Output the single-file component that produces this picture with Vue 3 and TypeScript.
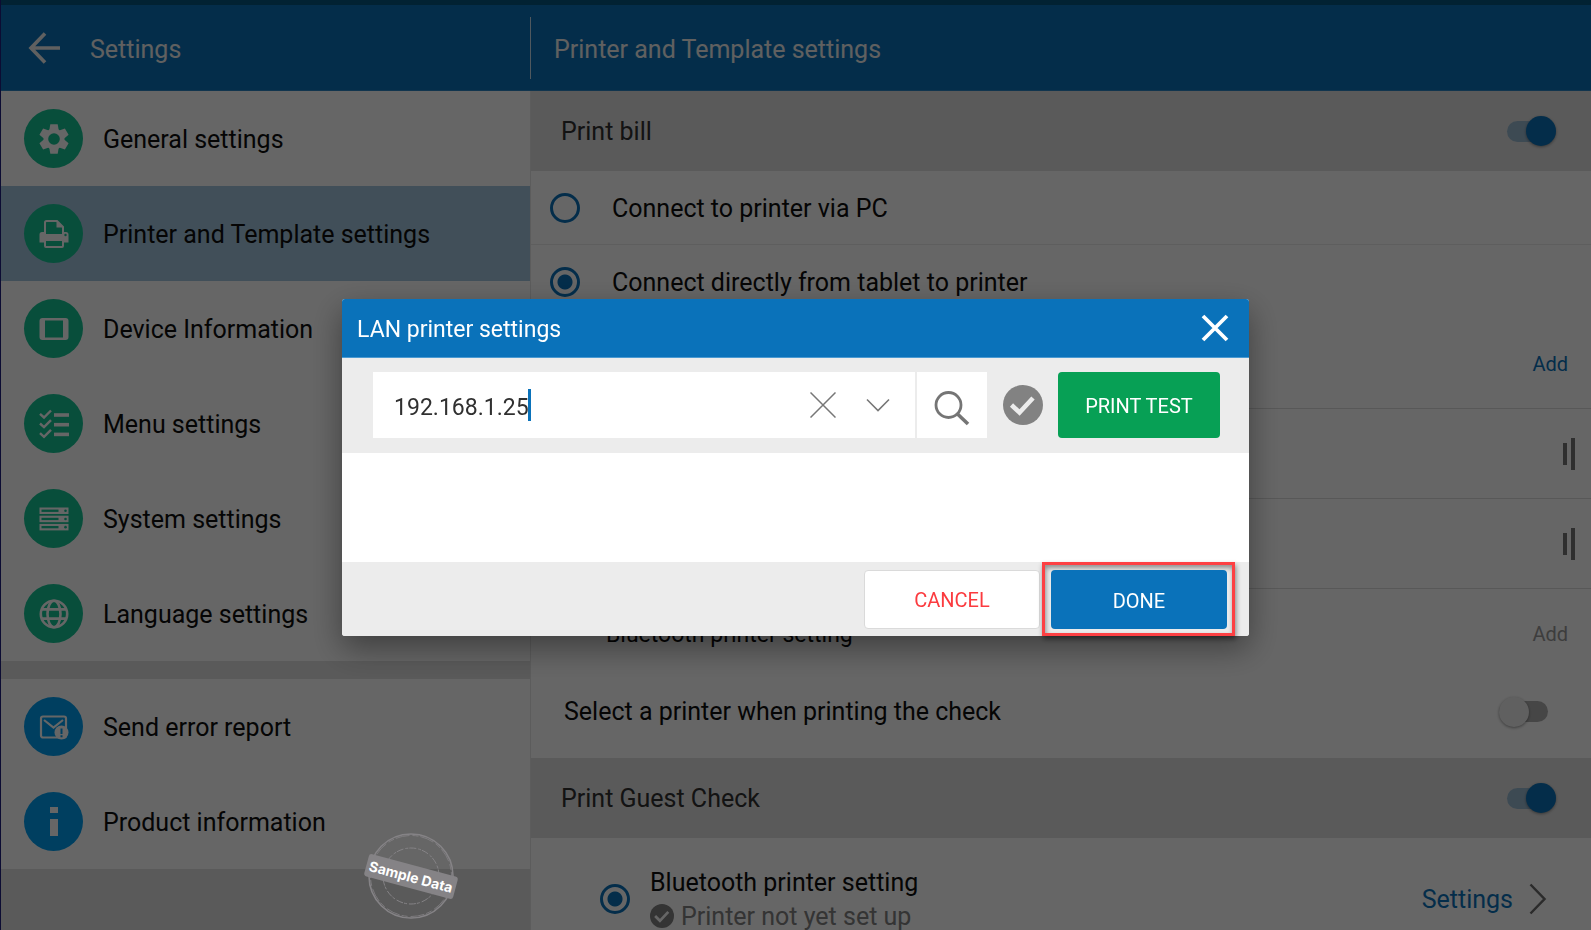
<script setup lang="ts">
import { ref } from 'vue'

interface MenuItem {
  id: string
  label: string
}

const primaryMenu: MenuItem[] = [
  { id: 'general', label: 'General settings' },
  { id: 'printer', label: 'Printer and Template settings' },
  { id: 'device', label: 'Device Information' },
  { id: 'menu', label: 'Menu settings' },
  { id: 'system', label: 'System settings' },
  { id: 'language', label: 'Language settings' },
]
const secondaryMenu: MenuItem[] = [
  { id: 'report', label: 'Send error report' },
  { id: 'product', label: 'Product information' },
]

const activeId = ref('printer')
const connection = ref('tablet')
const printBill = ref(true)
const selectPrinter = ref(false)
const guestCheck = ref(true)
const guestPrinter = ref('bluetooth')
const address = ref('192.168.1.25')
const gearAngles = [0, 60, 120, 180, 240, 300]
const listRows = [0, 1, 2]
</script>

<template>
  <div class="app">
    <div class="status-strip"></div>
    <header class="topbar">
      <div class="topbar-left">
        <button class="icon-btn back" type="button" aria-label="Back">
          <svg width="32" height="32" viewBox="0 0 32 32" fill="none" stroke="currentColor" stroke-width="3.600">
            <path d="M17 1.500L3 16l14 14.500M3 16H32" />
          </svg>
        </button>
        <span class="bar-text">Settings</span>
      </div>
      <h1 class="topbar-title bar-text">Printer and Template settings</h1>
    </header>

    <div class="body">
      <nav class="sidebar">
        <div class="menu">
          <a
            v-for="item in primaryMenu"
            :key="item.id"
            href="#"
            class="menu-item"
            :class="{ active: item.id === activeId }"
            @click.prevent="activeId = item.id"
          >
            <span class="badge green">
              <svg width="30" height="30" viewBox="0 0 30 30">
                <g v-if="item.id === 'general'">
                  <circle cx="15" cy="15" r="10.500" fill="#fff" />
                  <path
                    v-for="a in gearAngles"
                    :key="a"
                    d="M11.300 0.300h7.400l1 6h-9.400z"
                    fill="#fff"
                    :transform="`rotate(${a} 15 15)`"
                  />
                  <circle cx="15" cy="15" r="5.800" fill="#14c394" />
                </g>
                <g v-else-if="item.id === 'printer'">
                  <path d="M0.500 15.500a2.500 2.500 0 0 1 2.500-2.500h24a2.500 2.500 0 0 1 2.500 2.500v8h-29z" fill="#fff" />
                  <path d="M6 16V3.500a1.500 1.500 0 0 1 1.500-1.500h10.500l6 6v8z" fill="#14c394" stroke="#fff" stroke-width="2" />
                  <path d="M17.500 2v6.500h6.500z" fill="#fff" />
                  <rect x="5" y="15" width="20" height="4" fill="#fff" />
                  <rect x="6" y="21" width="18" height="7" rx="1" fill="#14c394" stroke="#fff" stroke-width="2" />
                  <circle cx="26.500" cy="16" r="1.200" fill="#14c394" />
                </g>
                <g v-else-if="item.id === 'device'">
                  <rect x="0.500" y="4" width="29" height="22" rx="3" fill="#fff" />
                  <rect x="6" y="6.500" width="18" height="17" fill="#14c394" />
                </g>
                <g v-else-if="item.id === 'menu'" fill="none" stroke="#fff">
                  <g v-for="n in listRows" :key="n" :transform="`translate(0 ${n * 9.7})`">
                    <path d="M1 4.800l4 3.700 7-7" stroke-width="2.400" />
                    <path d="M15 6h15" stroke-width="3.600" />
                  </g>
                </g>
                <g v-else-if="item.id === 'system'">
                  <g v-for="n in listRows" :key="n" :transform="`translate(0 ${n * 8.2})`">
                    <rect x="0.500" y="3.500" width="29" height="6.500" fill="#fff" />
                    <rect x="2.500" y="5.600" width="17" height="2.300" fill="#14c394" />
                    <circle cx="26.500" cy="6.750" r="1.300" fill="#14c394" />
                  </g>
                </g>
                <g v-else fill="none" stroke="#fff" stroke-width="2.600">
                  <circle cx="15" cy="15" r="13.200" />
                  <ellipse cx="15" cy="15" rx="6.500" ry="13.200" />
                  <path d="M3 10.400h24M3 19.600h24" />
                </g>
              </svg>
            </span>
            <span class="text">{{ item.label }}</span>
          </a>
        </div>
        <div class="menu">
          <a v-for="item in secondaryMenu" :key="item.id" href="#" class="menu-item" @click.prevent="activeId = item.id">
            <span class="badge blue">
              <svg width="30" height="30" viewBox="0 0 30 30">
                <g v-if="item.id === 'report'" fill="none" stroke="#fff">
                  <rect x="2" y="4.500" width="25" height="21" rx="2" stroke-width="2.200" />
                  <path d="M5 8l9.500 7.500L24 8" stroke-width="2.200" />
                  <circle cx="22.500" cy="20.500" r="7" fill="#fff" stroke="none" />
                  <path d="M22.500 16.500v5.500M22.500 23.300v2" stroke="#009ef0" stroke-width="2" />
                </g>
                <path v-else d="M11 0h8v6h-8zM11 12h8v17h-8z" fill="#fff" />
              </svg>
            </span>
            <span class="text">{{ item.label }}</span>
          </a>
        </div>
      </nav>

      <main class="content">
        <label class="section">
          <span class="text">Print bill</span>
          <input v-model="printBill" type="checkbox" class="switch" />
        </label>
        <label class="row option lined">
          <input v-model="connection" type="radio" class="radio" name="connection" value="pc" />
          <span class="text">Connect to printer via PC</span>
        </label>
        <label class="row option">
          <input v-model="connection" type="radio" class="radio" name="connection" value="tablet" />
          <span class="text">Connect directly from tablet to printer</span>
        </label>
        <div class="row sub deep">
          <a href="#" class="add">Add</a>
        </div>
        <div v-for="n in 2" :key="n" class="row sub drag">
          <button class="handle" type="button" aria-label="Reorder"><i></i><i></i></button>
        </div>
        <div class="row sub muted">
          <span class="text">Bluetooth printer setting</span>
          <a href="#" class="add">Add</a>
        </div>
        <label class="row choose">
          <span>Select a printer when printing the check</span>
          <input v-model="selectPrinter" type="checkbox" class="switch" />
        </label>
        <label class="section">
          <span class="text">Print Guest Check</span>
          <input v-model="guestCheck" type="checkbox" class="switch" />
        </label>
        <div class="row guest">
          <label class="guest-label">
            <input v-model="guestPrinter" type="radio" class="radio" name="guest" value="bluetooth" />
            <span class="guest-text">
              <span class="text">Bluetooth printer setting</span>
              <span class="state">
                <svg width="24" height="24" viewBox="0 0 40 40">
                  <circle cx="20" cy="20" r="20" fill="#828282" />
                  <path d="M8.500 20l8 8 14-15" fill="none" stroke="#fff" stroke-width="4.500" />
                </svg>
                <span class="text">Printer not yet set up</span>
              </span>
            </span>
          </label>
          <a href="#" class="more">
            <span class="text">Settings</span>
            <svg width="18" height="32" viewBox="0 0 18 32" fill="none" stroke="#6b6b6b" stroke-width="2.500">
              <path d="M1.500 1.500L15.500 16 1.500 30.500" />
            </svg>
          </a>
        </div>
      </main>
    </div>

    <div class="backdrop">
      <section class="dialog" role="dialog" aria-labelledby="dialog-title">
        <header class="dialog-head">
          <h2 id="dialog-title" class="bar-text">LAN printer settings</h2>
          <button class="icon-btn" type="button" aria-label="Close">
            <svg width="28" height="28" viewBox="0 0 28 28" fill="none" stroke="#fff" stroke-width="3.800">
              <path d="M2 2l24 24M26 2L2 26" />
            </svg>
          </button>
        </header>
        <div class="dialog-tools">
          <div class="field">
            <input v-model="address" class="address" type="text" aria-label="Printer address" />
            <span class="caret"></span>
            <button class="icon-btn clear" type="button" aria-label="Clear">
              <svg width="26" height="26" viewBox="0 0 26 26" fill="none" stroke="#777" stroke-width="1.500">
                <path d="M0.500 0.500l25 25M25.500 0.500l-25 25" />
              </svg>
            </button>
            <button class="icon-btn" type="button" aria-label="Show addresses">
              <svg width="24" height="14" viewBox="0 0 24 14" fill="none" stroke="#777" stroke-width="1.600">
                <path d="M1 1.500l11 11 11-11" />
              </svg>
            </button>
          </div>
          <button class="search" type="button" aria-label="Search">
            <svg width="36" height="36" viewBox="0 0 36 36" fill="none" stroke="#757575">
              <circle cx="14.500" cy="15" r="12.500" stroke-width="2.800" />
              <path d="M23.500 24L34 34" stroke-width="3.600" />
            </svg>
          </button>
          <svg class="verified" width="40" height="40" viewBox="0 0 40 40">
            <circle cx="20" cy="20" r="20" fill="#828282" />
            <path d="M8.500 20l8 7.500L30 13" fill="none" stroke="#ececec" stroke-width="4.600" />
          </svg>
          <button class="btn test" type="button">PRINT TEST</button>
        </div>
        <div class="dialog-body"></div>
        <footer class="dialog-foot">
          <button class="btn cancel" type="button">CANCEL</button>
          <div class="highlight">
            <button class="btn done" type="button">DONE</button>
          </div>
        </footer>
      </section>
    </div>

    <div class="stamp">
      <svg width="88" height="88" viewBox="0 0 88 88" fill="none" stroke="#858386">
        <circle cx="44" cy="44" r="42" stroke-width="1.600" />
        <circle cx="44" cy="44" r="40.500" stroke-width="0.800" stroke-dasharray="14 3 6 2" />
        <circle cx="44" cy="44" r="28" stroke-width="1" stroke-dasharray="7 2 3 1" />
      </svg>
      <span>Sample Data</span>
    </div>
  </div>
</template>

<style>
body {
  margin: 0;
}
</style>

<style scoped>
* {
  box-sizing: border-box;
}
.app {
  position: relative;
  display: flex;
  flex-direction: column;
  height: 100vh;
  overflow: hidden;
  font-family: Roboto, "Liberation Sans", sans-serif;
  font-size: 25px;
  line-height: 30px;
  color: #0d0d0d;
  background: #fff;
  border-left: 1px solid #202080;
}
a {
  color: inherit;
  text-decoration: none;
}
button {
  font: inherit;
  border: 0;
  padding: 0;
  cursor: pointer;
}
.text {
  padding-top: 2px;
}
.bar-text {
  padding-top: 4px;
}
.icon-btn {
  display: flex;
  background: none;
  color: inherit;
}
.status-strip {
  flex: none;
  height: 5px;
  background: #055580;
}
.topbar {
  flex: none;
  display: grid;
  grid-template-columns: minmax(0, 1fr) minmax(0, 2fr);
  align-items: center;
  height: 86px;
  color: #f0f0f0;
  background: #0a72ba;
  border-bottom: 1px solid #2b85c4;
}
.topbar-left {
  display: flex;
  align-items: center;
  gap: 30px;
  height: 62px;
  padding-left: 27px;
  border-right: 1px solid #c8dcec;
}
.topbar-title {
  margin: 0;
  padding-left: 23px;
  font-size: 25px;
  font-weight: 400;
}
.body {
  flex: 1;
  min-height: 0;
  display: grid;
  grid-template-columns: minmax(0, 1fr) minmax(0, 2fr);
}
.sidebar {
  display: flex;
  flex-direction: column;
  gap: 18px;
  min-height: 0;
  background: #e1e1e1;
  border-right: 1px solid #e6e6e6;
}
.menu {
  background: #fff;
}
.menu-item {
  display: flex;
  align-items: center;
  gap: 20px;
  height: 95px;
  padding-left: 23px;
}
.menu-item.active {
  background: #a2c6de;
}
.badge {
  display: flex;
  align-items: center;
  justify-content: center;
  width: 59px;
  height: 59px;
  border-radius: 50%;
}
.green {
  background: #14c394;
}
.blue {
  background: #009ef0;
}
.content {
  min-height: 0;
  overflow: hidden;
  background: #fff;
}
.section {
  display: flex;
  align-items: center;
  justify-content: space-between;
  height: 80px;
  padding: 0 35px 0 30px;
  color: #303030;
  background: #e1e1e1;
}
.row {
  display: flex;
  align-items: center;
}
.option {
  gap: 32px;
  height: 74px;
  padding-left: 19px;
}
.lined {
  border-bottom: 1px solid #ececec;
}
.radio {
  appearance: none;
  flex: none;
  width: 30px;
  height: 30px;
  margin: 0;
  border: 3px solid #0a72ba;
  border-radius: 50%;
}
.radio:checked {
  background: radial-gradient(circle, #0a72ba 7px, transparent 8px);
}
.switch {
  appearance: none;
  display: flex;
  align-items: center;
  width: 49px;
  height: 21px;
  margin: 0;
  border-radius: 11px;
  background: #b0b0b0;
}
.switch::before {
  content: "";
  width: 30px;
  height: 30px;
  border-radius: 50%;
  background: #f0f0f0;
  box-shadow: 0 1px 3px rgba(0, 0, 0, 0.4);
}
.switch:checked {
  justify-content: flex-end;
  background: #9ab9d0;
}
.switch:checked::before {
  background: #0a72ba;
}
.sub {
  height: 90px;
  padding: 0 23px 0 75px;
  font-size: 23px;
}
.deep,
.drag {
  border-bottom: 1px solid #dcdcdc;
}
.drag {
  padding-right: 16px;
}
.add {
  margin-left: auto;
  font-size: 20px;
  color: #0a72ba;
}
.muted .add {
  color: #9a9a9a;
}
.handle {
  display: flex;
  align-items: center;
  gap: 4px;
  margin-left: auto;
  background: none;
}
.handle i {
  width: 4px;
  height: 22px;
  background: #757575;
}
.handle i + i {
  height: 32px;
}
.choose {
  justify-content: space-between;
  height: 79px;
  padding: 0 43px 14px 33px;
}
.guest {
  justify-content: space-between;
  height: 122px;
  padding: 0 44px 0 69px;
}
.guest-label {
  display: flex;
  align-items: center;
  gap: 20px;
}
.guest-text {
  display: flex;
  flex-direction: column;
  gap: 2px;
}
.state {
  display: flex;
  align-items: center;
  gap: 7px;
  color: #828282;
}
.more {
  display: flex;
  align-items: center;
  gap: 16px;
  color: #0a72ba;
}
.backdrop {
  position: fixed;
  inset: 0;
  display: flex;
  align-items: center;
  justify-content: center;
  padding-top: 5px;
  background: rgba(0, 0, 0, 0.6);
}
.dialog {
  width: 57%;
  border-radius: 3px;
  background: #fff;
  box-shadow: 0 12px 32px rgba(0, 0, 0, 0.4);
}
.dialog-head {
  display: flex;
  align-items: center;
  justify-content: space-between;
  height: 59px;
  padding: 0 20px 0 15px;
  color: #fff;
  background: #0a72ba;
  border-bottom: 1px solid #4a9ad2;
  border-radius: 3px 3px 0 0;
}
.dialog-head h2 {
  margin: 0;
  font-size: 23px;
  font-weight: 400;
}
.dialog-tools {
  display: flex;
  align-items: center;
  padding: 14px 29px 15px 31px;
  background: #ececec;
}
.field {
  flex: 1;
  display: flex;
  align-items: center;
  height: 66px;
  padding: 0 25px 0 21px;
  background: #fff;
}
.address {
  field-sizing: content;
  padding: 5px 0 0;
  border: 0;
  outline: 0;
  font: inherit;
  font-size: 23px;
  color: #303030;
  background: none;
  caret-color: transparent;
}
.caret {
  width: 3px;
  height: 32px;
  margin-left: -1px;
  background: #0a72ba;
}
.clear {
  margin: 0 30px 0 auto;
}
.search {
  display: flex;
  align-items: center;
  justify-content: center;
  width: 70px;
  height: 66px;
  margin-left: 2px;
  padding-top: 6px;
  background: #fff;
}
.verified {
  margin: 0 15px 0 16px;
}
.btn {
  padding-top: 2px;
  border-radius: 4px;
  font-size: 20px;
}
.test {
  width: 162px;
  height: 66px;
  color: #fff;
  background: #07a055;
}
.dialog-body {
  height: 109px;
}
.dialog-foot {
  display: flex;
  align-items: center;
  justify-content: flex-end;
  gap: 2px;
  padding-right: 14px;
  background: #ececec;
  border-radius: 0 0 3px 3px;
}
.cancel {
  width: 176px;
  height: 59px;
  color: #fb3b3f;
  background: #fff;
  border: 1px solid #dadada;
}
.highlight {
  padding: 5px 5px 4px 6px;
  border: 3px solid #fd4043;
  box-shadow: 1px 3px 5px rgba(0, 0, 0, 0.45), inset 1px 3px 5px rgba(0, 0, 0, 0.4);
}
.done {
  display: block;
  width: 176px;
  height: 59px;
  color: #fff;
  background: #0a72ba;
}
.stamp {
  position: absolute;
  left: 364px;
  bottom: 10px;
  display: grid;
  place-items: center;
}
.stamp > * {
  grid-area: 1 / 1;
}
.stamp span {
  padding: 0 3px;
  border-radius: 3px;
  font-family: Inter, "Liberation Sans", sans-serif;
  font-size: 14px;
  font-weight: 700;
  line-height: 23px;
  white-space: nowrap;
  color: #fff;
  background: #858386;
  transform: rotate(15deg);
}
</style>
